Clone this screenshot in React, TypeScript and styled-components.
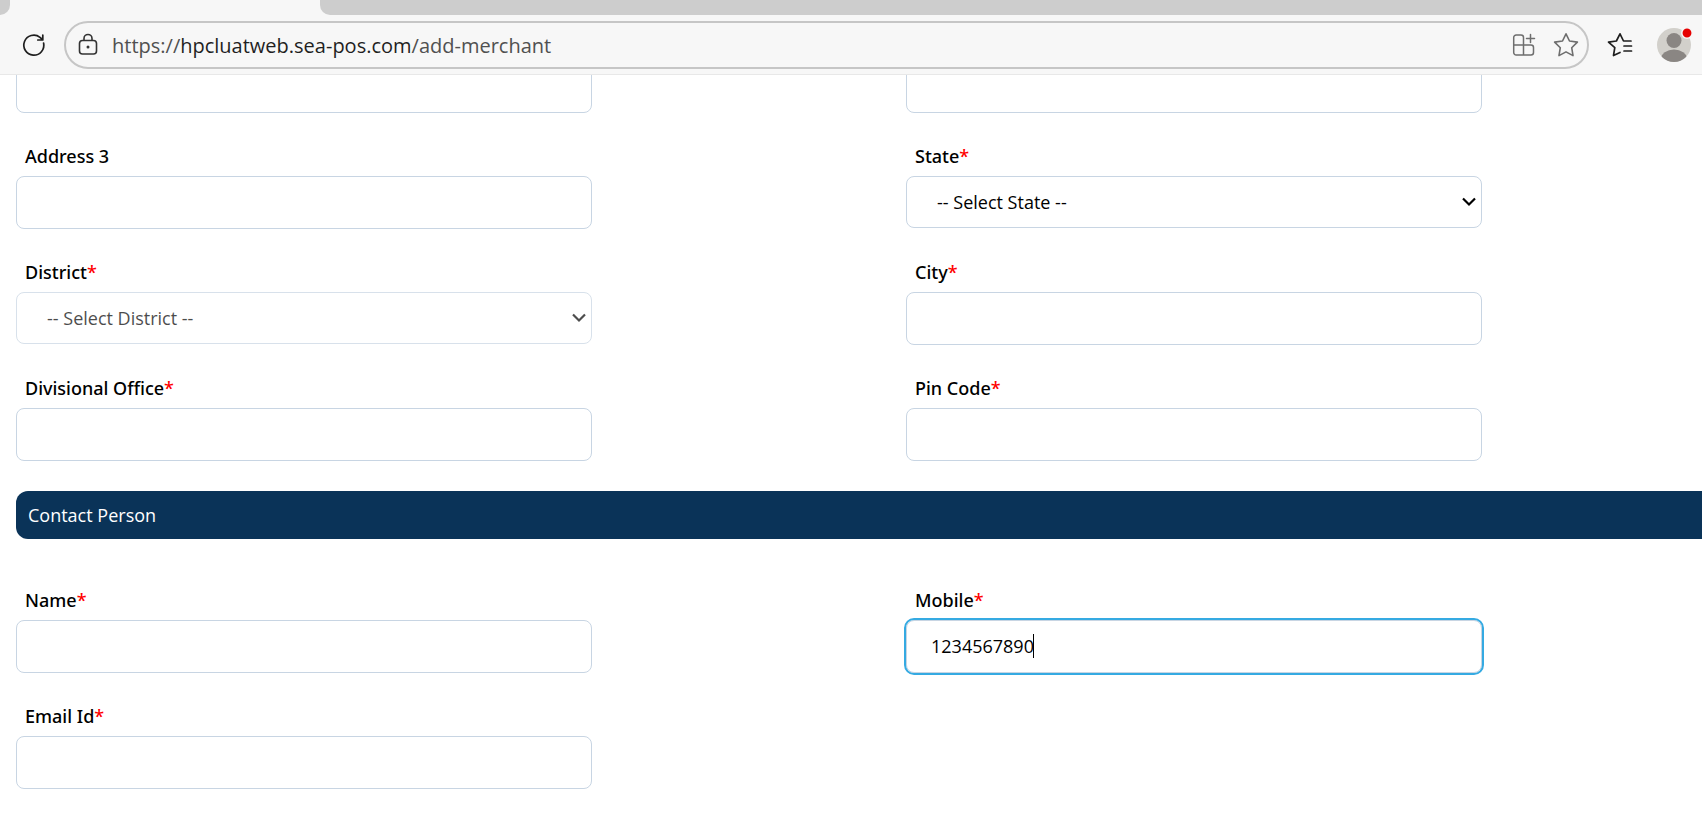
import React, { useState } from "react";
import styled, { createGlobalStyle, css } from "styled-components";

const GlobalStyle = createGlobalStyle`
  *, *::before, *::after { box-sizing: border-box; }
  html, body { margin: 0; padding: 0; }
  body {
    background: #fff;
    color: #000;
    font-family: "Open Sans", "Noto Sans", sans-serif;
    font-size: 18px;
    line-height: 24px;
    overflow-x: hidden;
  }
`;

const BrowserHeader = styled.header`
  position: sticky;
  top: 0;
  z-index: 2;
  background: #f7f7f7;
  border-bottom: 1px solid #e8e8e8;
`;

const TabStrip = styled.div`
  display: flex;
  height: 15px;
`;

const PreviousTab = styled.div`
  width: 10px;
  background: #cdcdcd;
  border-bottom-right-radius: 10px;
`;

const ActiveTab = styled.div`
  width: 310px;
`;

const EmptyStrip = styled.div`
  flex: 1;
  background: #cdcdcd;
  border-bottom-left-radius: 10px;
`;

const Toolbar = styled.div`
  display: flex;
  align-items: center;
  padding: 6px 9px 5px 16px;
`;

const IconButton = styled.button`
  display: flex;
  align-items: center;
  justify-content: center;
  width: 36px;
  height: 36px;
  flex: none;
  padding: 0;
  border: 0;
  background: none;
  color: #1f1f1f;
`;

const ToolbarActions = styled.div`
  display: flex;
  gap: 19px;
`;

const AddressActions = styled.div`
  display: flex;
  gap: 6px;
`;

const AddressBar = styled.div`
  display: flex;
  align-items: center;
  flex: 1;
  height: 48px;
  margin: 0 13px 0 12px;
  padding: 0 3px 0 4px;
  border: 2px solid #c6c6c6;
  border-radius: 24px;
`;

const urlText = css`
  flex: 1;
  min-width: 0;
  padding: 2px 0 0 6px;
  border: 0;
  outline: 0;
  background: none;
  color: #505050;
  font-family: "Open Sans", "Noto Sans", sans-serif;
  font-size: 20px;
  line-height: 28px;
  text-align: left;
`;

const UrlButton = styled.button`
  ${urlText}
`;

const UrlInput = styled.input`
  ${urlText}
`;

const Host = styled.span`
  color: #1f1f1f;
`;

const Form = styled.form`
  margin-top: -15px;
  padding: 0 0 28px 16px;
`;

const FieldGrid = styled.div`
  display: grid;
  grid-template-columns: 576fr 314fr 576fr 220fr;
  row-gap: 31px;
`;

const Field = styled.div<{ $side: "left" | "right" }>`
  grid-column: ${(p) => (p.$side === "left" ? 1 : 3)};
  display: flex;
  flex-direction: column;
`;

const Label = styled.label`
  padding: 0 9px;
  margin-bottom: 8px;
  font-family: "Noto Sans", "Open Sans", sans-serif;
  font-weight: 500;
`;

const Required = styled.span`
  color: #f00;
`;

const ControlBox = styled.div`
  position: relative;
  display: flex;
  height: 53px;
  align-items: flex-start;
`;

const control = css`
  width: 100%;
  border: 1px solid #c8d5e3;
  border-radius: 8px;
  background-color: #fff;
  color: #000;
  font: inherit;
`;

const TextInput = styled.input<{ $active?: boolean }>`
  ${control}
  height: 53px;
  padding: 0 24px 2px;
  outline: ${(p) => (p.$active ? "2px solid #35aae2" : "0")};
  caret-color: ${(p) => (p.$active ? "transparent" : "auto")};
`;

const Caret = styled.span`
  position: absolute;
  top: 14px;
  left: 127px;
  width: 1px;
  height: 24px;
  background: #000;
  pointer-events: none;
`;

const Select = styled.select`
  ${control}
  height: 52px;
  padding: 0 30px;
  appearance: none;

  &:disabled {
    opacity: 0.7;
  }
`;

const Arrow = styled.svg<{ $muted?: boolean }>`
  position: absolute;
  top: 21px;
  right: 5px;
  pointer-events: none;
  stroke: ${(p) => (p.$muted ? "#4d4d4d" : "#000")};
`;

const SectionTitle = styled.h2`
  margin: 30px 0 49px;
  padding: 12px;
  border-radius: 12px 0 0 12px;
  background: #0a3358;
  color: #fff;
  font-size: 18px;
  font-weight: 400;
  line-height: 24px;
`;

const RefreshIcon = () => (
  <svg width="26" height="26" viewBox="0 0 26 26" fill="none" stroke="currentColor" strokeWidth="1.7" strokeLinecap="round" strokeLinejoin="round">
    <path d="M22.6 11a10 10 0 1 1-3.6-5.700l2.600 2.400M21.800 3v5h-5" />
  </svg>
);

const LockIcon = () => (
  <svg width="24" height="26" viewBox="0 0 24 26" fill="none" stroke="#333" strokeWidth="1.6">
    <rect x="3.500" y="8.500" width="17" height="13.500" rx="3" />
    <path d="M8 8.500V6.500a4 4 0 0 1 8 0v2" />
    <circle cx="12" cy="15" r="1.500" fill="#333" stroke="none" />
  </svg>
);

const AppsIcon = () => (
  <svg width="26" height="26" viewBox="0 0 26 26" fill="none" stroke="#6e6e6e" strokeWidth="1.5" strokeLinecap="round">
    <path d="M12.500 13H2.700V5.500a2.500 2.500 0 0 1 2.500-2.500H10a2.500 2.500 0 0 1 2.500 2.500V23M2.700 13v7.500A2.500 2.500 0 0 0 5.200 23H20a2.500 2.500 0 0 0 2.500-2.500v-5A2.500 2.500 0 0 0 20 13h-7.500M19.500 2.500v8M15.500 6.500h8" />
  </svg>
);

const StarIcon = () => (
  <svg width="26" height="26" viewBox="0 0 26 26" fill="none" stroke="#6e6e6e" strokeWidth="1.6" strokeLinejoin="round">
    <path d="M13 1.800l3.500 7.200 7.900 1.100-5.700 5.600 1.300 7.900-7-3.700-7 3.700 1.300-7.900-5.700-5.600 7.900-1.100z" />
  </svg>
);

const FavoritesIcon = () => (
  <svg width="26" height="26" viewBox="0 0 26 26" fill="none" stroke="currentColor" strokeWidth="1.700" strokeLinecap="round" strokeLinejoin="round">
    <path d="M13 20.500l-6.500 3 1.300-7.800-6.300-5.600 7.900-1.100L13 1.800l3.500 7.200H24M17 14h7.500M17 19h7.500" />
  </svg>
);

const ProfileIcon = () => (
  <svg width="36" height="36" viewBox="0 0 36 36">
    <defs>
      <clipPath id="avatar"><circle cx="17" cy="18" r="17" /></clipPath>
    </defs>
    <circle cx="17" cy="18" r="17" fill="#d2d0cb" />
    <circle cx="17" cy="13.500" r="7.500" fill="#8a8683" />
    <ellipse cx="17" cy="32" rx="13" ry="9.500" fill="#8a8683" clipPath="url(#avatar)" />
    <circle cx="30" cy="6" r="5.200" fill="#e60000" stroke="#f7f7f7" strokeWidth="1.500" />
  </svg>
);

type FormFieldProps = {
  id: string;
  label: string;
  side: "left" | "right";
  required?: boolean;
  options?: string;
  disabled?: boolean;
  value?: string;
  active?: boolean;
};

function FormField({ id, label, side, required, options, disabled, value, active }: FormFieldProps) {
  return (
    <Field $side={side}>
      <Label htmlFor={id}>
        {label}
        {required && <Required>*</Required>}
      </Label>
      <ControlBox>
        {options ? (
          <>
            <Select id={id} disabled={disabled}>
              <option>{options}</option>
            </Select>
            <Arrow $muted={disabled} width="16" height="10" viewBox="0 0 16 10" fill="none" strokeWidth="2.2">
              <path d="M2 1.500l6 6 6-6" />
            </Arrow>
          </>
        ) : (
          <>
            <TextInput id={id} defaultValue={value} $active={active} />
            {active && <Caret />}
          </>
        )}
      </ControlBox>
    </Field>
  );
}

function AddressText() {
  const [editing, setEditing] = useState(false);
  const host = "hpcluatweb.sea-pos.com";
  const path = "/add-merchant";
  if (editing) {
    return <UrlInput aria-label="Address" autoFocus defaultValue={`https://${host}${path}`} onBlur={() => setEditing(false)} />;
  }
  return (
    <UrlButton type="button" onClick={() => setEditing(true)}>
      https://<Host>{host}</Host>{path}
    </UrlButton>
  );
}

export default function App() {
  return (
    <>
      <GlobalStyle />
      <BrowserHeader>
        <TabStrip>
          <PreviousTab />
          <ActiveTab />
          <EmptyStrip />
        </TabStrip>
        <Toolbar>
          <IconButton aria-label="Refresh"><RefreshIcon /></IconButton>
          <AddressBar>
            <IconButton aria-label="Site information"><LockIcon /></IconButton>
            <AddressText />
            <AddressActions>
              <IconButton aria-label="App available"><AppsIcon /></IconButton>
              <IconButton aria-label="Add to favorites"><StarIcon /></IconButton>
            </AddressActions>
          </AddressBar>
          <ToolbarActions>
            <IconButton aria-label="Favorites"><FavoritesIcon /></IconButton>
            <IconButton aria-label="Profile"><ProfileIcon /></IconButton>
          </ToolbarActions>
        </Toolbar>
      </BrowserHeader>
      <Form>
        <FieldGrid>
          <Field $side="left"><TextInput aria-label="Address 1" /></Field>
          <Field $side="right"><TextInput aria-label="Address 2" /></Field>
          <FormField id="address3" label="Address 3" side="left" />
          <FormField id="state" label="State" side="right" required options="-- Select State --" />
          <FormField id="district" label="District" side="left" required options="-- Select District --" disabled />
          <FormField id="city" label="City" side="right" required />
          <FormField id="office" label="Divisional Office" side="left" required />
          <FormField id="pin" label="Pin Code" side="right" required />
        </FieldGrid>
        <SectionTitle>Contact Person</SectionTitle>
        <FieldGrid>
          <FormField id="name" label="Name" side="left" required />
          <FormField id="mobile" label="Mobile" side="right" required value="1234567890" active />
          <FormField id="email" label="Email Id" side="left" required />
        </FieldGrid>
      </Form>
    </>
  );
}
